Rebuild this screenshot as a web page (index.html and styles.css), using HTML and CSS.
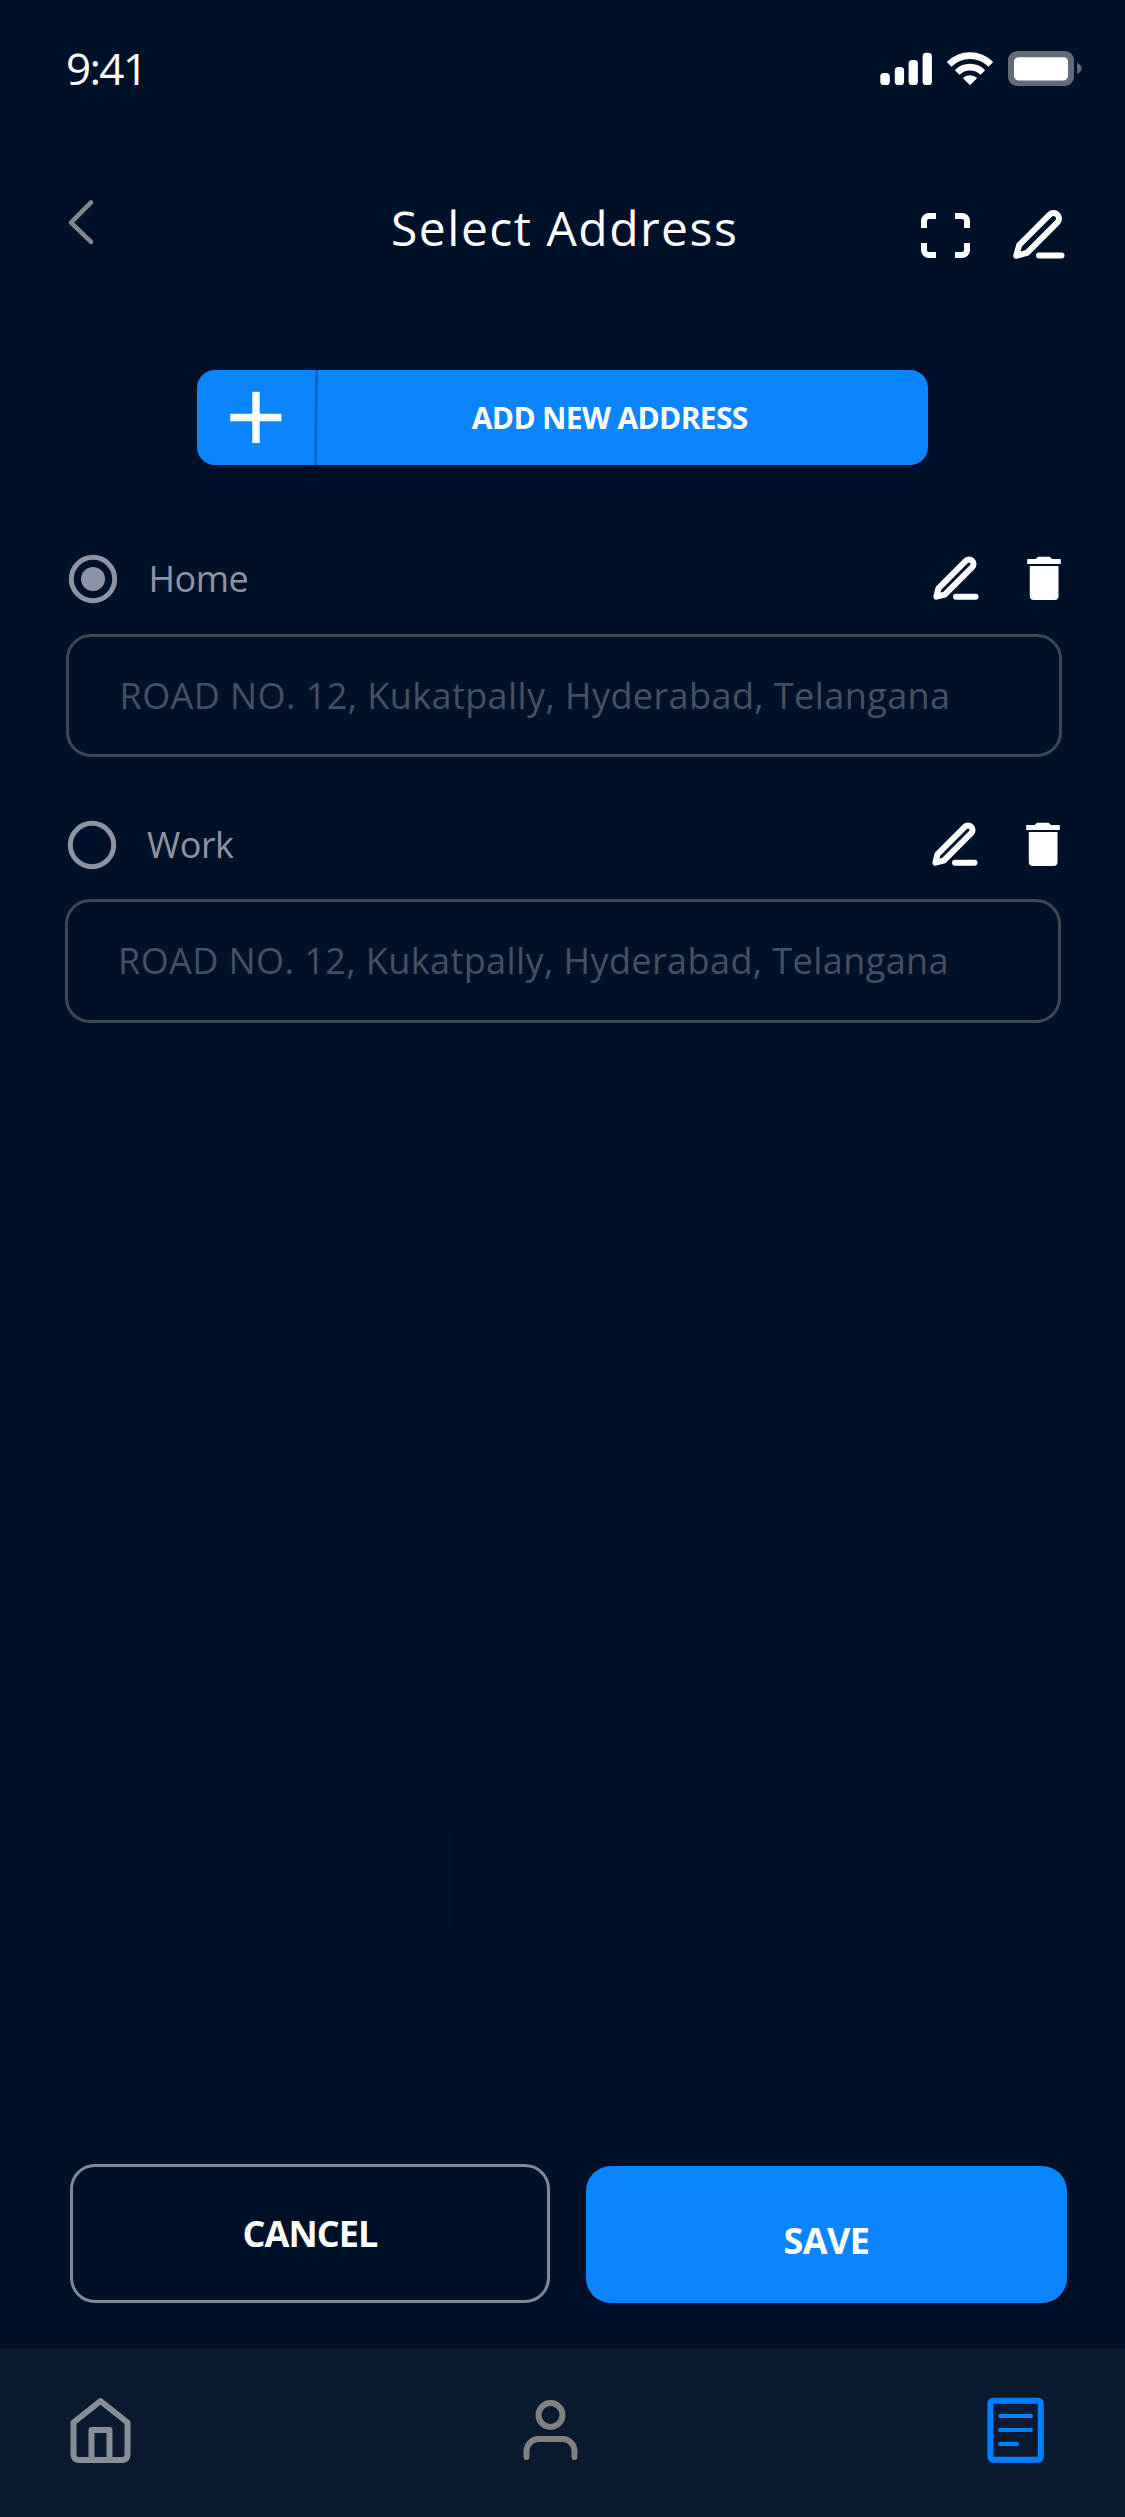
FILE: index.html
```html
<!DOCTYPE html>
<html lang="en">
<head>
<meta charset="utf-8">
<title>Select Address</title>
<link rel="stylesheet" href="styles.css">
</head>
<body>
<svg class="defs" aria-hidden="true">
  <symbol id="edit" viewBox="0 0 52 50">
    <g fill="none" stroke="#fff" stroke-width="6" stroke-linecap="round" stroke-linejoin="round">
      <path d="M8.4 35.3 35.8 7.8A4.5 4.5 0 0 1 42.2 14.2L14.8 41.6 6.4 43.7Z"/>
      <path d="M26 43.8H45.5"/>
    </g>
  </symbol>
  <symbol id="trash" viewBox="0 0 36 46">
    <path fill="#fff" d="M1.2 3H9.7L12 .7H23.7L26 3H34.8V8H1.2ZM3.8 10H32.5V40a4 4 0 0 1-4 4H7.8a4 4 0 0 1-4-4Z"/>
  </symbol>
</svg>
<div class="screen">
  <div class="status">
    <span class="time">9:41</span>
    <svg class="signals" width="204" height="38" viewBox="0 0 204 38">
      <g fill="#fff">
        <rect x="2.3" y="23" width="9.5" height="12" rx="3.6"/>
        <rect x="16.8" y="17" width="9.3" height="18" rx="3.6"/>
        <rect x="30.6" y="10" width="9.3" height="25" rx="3.6"/>
        <rect x="44.6" y="2.8" width="9.3" height="32.2" rx="3.6"/>
      </g>
      <g fill="none" stroke="#fff" stroke-width="6.6">
        <path d="M71.2 14.4A29 29 0 0 1 112.8 14.4"/>
        <path d="M79.2 22.5A18 18 0 0 1 104.8 22.5"/>
      </g>
      <path fill="#fff" d="M84.8 27.9A11 11 0 0 1 99.2 27.9L92 35.3Z"/>
      <rect x="130" y="1" width="66" height="35" rx="9" fill="#636b7a"/>
      <rect x="136" y="7.2" width="54" height="23.2" rx="4.5" fill="#fff"/>
      <path d="M199 12.8Q203.6 15 203.6 18.4T199 24Z" fill="#636b7a"/>
    </svg>
  </div>

  <header class="header">
    <svg class="back" width="30" height="50" viewBox="0 0 30 50"><path d="M26 4.4 6 24.6 26 43.8" fill="none" stroke="#80878f" stroke-width="4.6" stroke-linecap="round" stroke-linejoin="round"/></svg>
    <h1 class="title">Select Address</h1>
    <div class="tools">
      <svg width="49" height="45" viewBox="0 0 49 45"><path d="M15 3H8A5 5 0 0 0 3 8V15M34 3H41A5 5 0 0 1 46 8V15M46 30V37A5 5 0 0 1 41 42H34M15 42H8A5 5 0 0 1 3 37V30" fill="none" stroke="#fff" stroke-width="6"/></svg>
      <svg width="56" height="53" viewBox="0 0 56 53"><g fill="none" stroke="#fff" stroke-width="6" stroke-linecap="round" stroke-linejoin="round"><path d="M9.2 37 39.6 6.6A5.5 5.5 0 0 1 47.4 14.4L17 44.8 6.2 47.8Z"/><path d="M29 47.5H51.5"/></g></svg>
    </div>
  </header>

  <div class="add">
    <svg width="122" height="95" viewBox="0 0 122 95"><path d="M33.3 47.5H84.4M59 21.8V73.1" stroke="#fff" stroke-width="7.4"/><path d="M119.6 0 118.4 95" stroke="#0867c8" stroke-width="3"/></svg>
    <span>ADD NEW ADDRESS</span>
  </div>

  <section class="address">
    <div class="row">
      <svg class="radio" width="50" height="50" viewBox="0 0 50 50"><circle cx="25" cy="25" r="21.7" fill="none" stroke="#8e93a4" stroke-width="5"/><circle cx="25" cy="25" r="12" fill="#8e93a4"/></svg>
      <span class="label">Home</span>
      <svg class="edit" width="52" height="50"><use href="#edit"/></svg>
      <svg class="trash" width="36" height="46"><use href="#trash"/></svg>
    </div>
    <div class="field">ROAD NO. 12, Kukatpally, Hyderabad, Telangana</div>
  </section>

  <section class="address second">
    <div class="row">
      <svg class="radio" width="50" height="50" viewBox="0 0 50 50"><circle cx="25" cy="25" r="21.7" fill="none" stroke="#8e93a4" stroke-width="5"/></svg>
      <span class="label">Work</span>
      <svg class="edit" width="52" height="50"><use href="#edit"/></svg>
      <svg class="trash" width="36" height="46"><use href="#trash"/></svg>
    </div>
    <div class="field">ROAD NO. 12, Kukatpally, Hyderabad, Telangana</div>
  </section>

  <div class="divider"></div>

  <div class="actions">
    <div class="btn cancel">CANCEL</div>
    <div class="btn save">SAVE</div>
  </div>

  <nav class="nav">
    <svg width="62" height="68" viewBox="0 0 62 68"><g fill="none" stroke="#868e98" stroke-width="6" stroke-linejoin="round"><path d="M3.5 25.5 30.5 4 57.5 25.5V58A5 5 0 0 1 52.5 63H8.5A5 5 0 0 1 3.5 58Z"/><path d="M21.5 63V33H39.5V63"/></g></svg>
    <svg class="user" width="56" height="68" viewBox="0 0 56 68"><g fill="none" stroke="#808080" stroke-width="6" stroke-linecap="round"><circle cx="27.5" cy="18" r="12"/><path d="M3.5 60V54A12 12 0 0 1 15.5 42H39.5A12 12 0 0 1 51.5 54V60"/></g></svg>
    <svg width="58" height="68" viewBox="0 0 58 68"><g fill="none" stroke="#0080ff" stroke-linecap="round"><rect x="3.4" y="3.7" width="50.4" height="59" rx="2.5" stroke-width="6"/><path d="M13 19H44M13 33H44M13 47H30" stroke-width="4"/></g></svg>
  </nav>
</div>
</body>
</html>
```
FILE: styles.css
```css
* { box-sizing: border-box; }
body {
  margin: 0;
  background: #001028;
  font-family: "Open Sans", "Noto Sans", sans-serif;
  color: #fff;
}
svg { display: block; flex: none; }
.defs { display: none; }
.screen {
  width: 1125px;
  height: 2517px;
  display: flex;
  flex-direction: column;
  overflow: hidden;
}
.status {
  height: 170px;
  padding: 38px 43px 0 66px;
  display: flex;
  justify-content: space-between;
}
.time {
  font-size: 44px;
  line-height: 60px;
  letter-spacing: -1.7px;
}
.signals { margin-top: 12px; }
.header {
  height: 200px;
  display: grid;
  grid-template-columns: 65px 326px 1fr 148px 56px;
}
.back { margin: 28px 0 0 65px; }
.title {
  grid-column: 3;
  margin: 28px 0 0;
  font-size: 48px;
  line-height: 60px;
  font-weight: 400;
  letter-spacing: 1.5px;
  white-space: nowrap;
}
.tools {
  grid-column: 4 / 6;
  display: flex;
  gap: 40px;
  padding-top: 38px;
}
.tools svg:first-child { margin-top: 5px; }
.add {
  width: 731.5px;
  height: 95px;
  margin-left: 196.5px;
  border-radius: 18px;
  background: #0a84ff;
  display: flex;
  align-items: center;
  overflow: hidden;
  font-size: 30px;
  font-weight: 700;
  letter-spacing: -0.65px;
}
.add span { flex: 1; text-align: center; padding-right: 27px; }
.address { width: 996px; margin: 89px 0 0 66px; }
.address.second { margin: 62.5px 0 0 64.5px; }
.row { height: 79.5px; display: flex; align-items: flex-start; }
.radio { margin-left: 2px; }
.label {
  flex: 1;
  margin-left: 30.5px;
  font-size: 36px;
  line-height: 49px;
  letter-spacing: -0.5px;
  color: #8e93a4;
}
.edit { margin: -1px 44px 0 0; }
.trash { margin-top: 2px; }
.field {
  height: 123.5px;
  padding-left: 50.5px;
  border: 3px solid #3f4756;
  border-radius: 25px;
  font-size: 36px;
  line-height: 117px;
  letter-spacing: 0.42px;
  color: #465064;
  white-space: nowrap;
}
.divider {
  width: 3px;
  height: 98px;
  margin: 811px 0 0 453px;
  background: #000c1e;
}
.actions {
  margin-top: 232px;
  padding-left: 70px;
  display: flex;
  gap: 36px;
}
.btn {
  height: 139px;
  border-radius: 25px;
  text-align: center;
  font-size: 36px;
  font-weight: 700;
  letter-spacing: -0.9px;
}
.cancel { width: 480px; border: 3px solid #808796; line-height: 134px; }
.save { width: 481px; height: 137px; margin-top: 2px; background: #0a84ff; line-height: 150px; letter-spacing: -0.6px; }
.nav {
  height: 168px;
  margin-top: auto;
  padding: 48px 80px 0 70px;
  display: flex;
  justify-content: space-between;
  background: #0b1a30;
  box-shadow: 0 -1px 10px rgba(8, 16, 24, 0.6);
}
.user { margin-right: 18px; }
```
